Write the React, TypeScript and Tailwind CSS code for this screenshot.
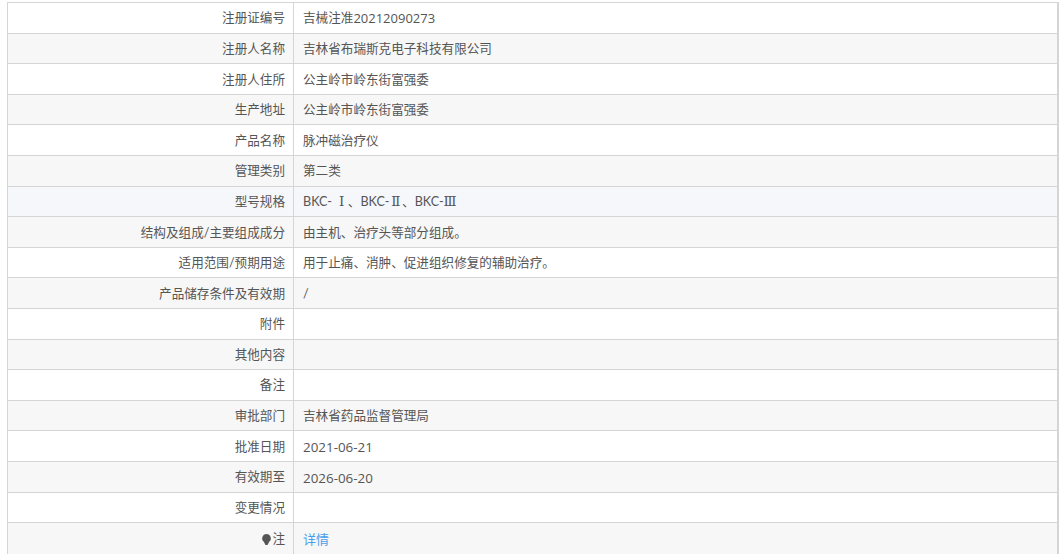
function Roman({ children }: { children: string }) {
  return <span className="inline-flex justify-center w-[12.6px] font-['DejaVu_Serif'] text-[13.5px] leading-none">{children}</span>;
}

const rows: [string, React.ReactNode, boolean?][] = [
  [
    "注册证编号",
    <>
      吉械注准<span className="font-['Open_Sans'] text-[13px]">20212090273</span>
    </>,
  ],
  ["注册人名称", "吉林省布瑞斯克电子科技有限公司"],
  ["注册人住所", "公主岭市岭东街富强委"],
  ["生产地址", "公主岭市岭东街富强委"],
  ["产品名称", "脉冲磁治疗仪"],
  ["管理类别", "第二类"],
  [
    "型号规格",
    <span className="whitespace-pre">
      BKC- <Roman>Ⅰ</Roman>、BKC-<Roman>Ⅱ</Roman>、BKC-<Roman>Ⅲ</Roman>
    </span>,
    true,
  ],
  ["结构及组成/主要组成成分", "由主机、治疗头等部分组成。"],
  ["适用范围/预期用途", "用于止痛、消肿、促进组织修复的辅助治疗。"],
  ["产品储存条件及有效期", "/"],
  ["附件", ""],
  ["其他内容", ""],
  ["备注", ""],
  ["审批部门", "吉林省药品监督管理局"],
  ["批准日期", <span className="font-['Open_Sans'] text-[13.4px]">2021-06-21</span>],
  ["有效期至", <span className="font-['Open_Sans'] text-[13.4px]">2026-06-20</span>],
  ["变更情况", ""],
];

function Row({ label, value, odd, hover, last }: { label: React.ReactNode; value: React.ReactNode; odd: boolean; hover?: boolean; last?: boolean }) {
  const bg = hover ? "bg-[#f5f7fb]" : odd ? "bg-[#f7f7f7]" : "bg-white";
  return (
    <div className={`grid grid-cols-[286px_1fr] h-[30.6px] border-[#d5d5d5] ${last ? "" : "border-b"} ${bg}`}>
      <div className="flex items-center justify-end pr-2 pt-[2px] border-r border-[#d5d5d5]">{label}</div>
      <div className="flex items-center pl-[9px] pt-[2px]">{value}</div>
    </div>
  );
}

export default function App() {
  return (
    <div className="h-[555px] overflow-hidden bg-white pt-[2px] pl-[7px] pr-[4px] text-[12.6px] text-[#555] font-['Lato','Noto_Sans_CJK_SC',sans-serif]">
      <div className="border-t border-x border-r-2 border-[#d5d5d5]">
        {rows.map(([label, value, hover], i) => (
          <Row key={i} label={label} value={value} odd={i % 2 === 1} hover={hover} />
        ))}
        <Row
          odd
          last
          label={
            <>
              <svg width="11" height="13" viewBox="0 0 11 13">
                <path d="M5.5 1a4.4 4.4 0 0 1 2.7 7.8L6.5 12h-2L2.8 8.8A4.4 4.4 0 0 1 5.5 1z" fill="#555" />
              </svg>
              注
            </>
          }
          value={<span className="text-[#4a9fe8] text-[13px]">详情</span>}
        />
      </div>
    </div>
  );
}
